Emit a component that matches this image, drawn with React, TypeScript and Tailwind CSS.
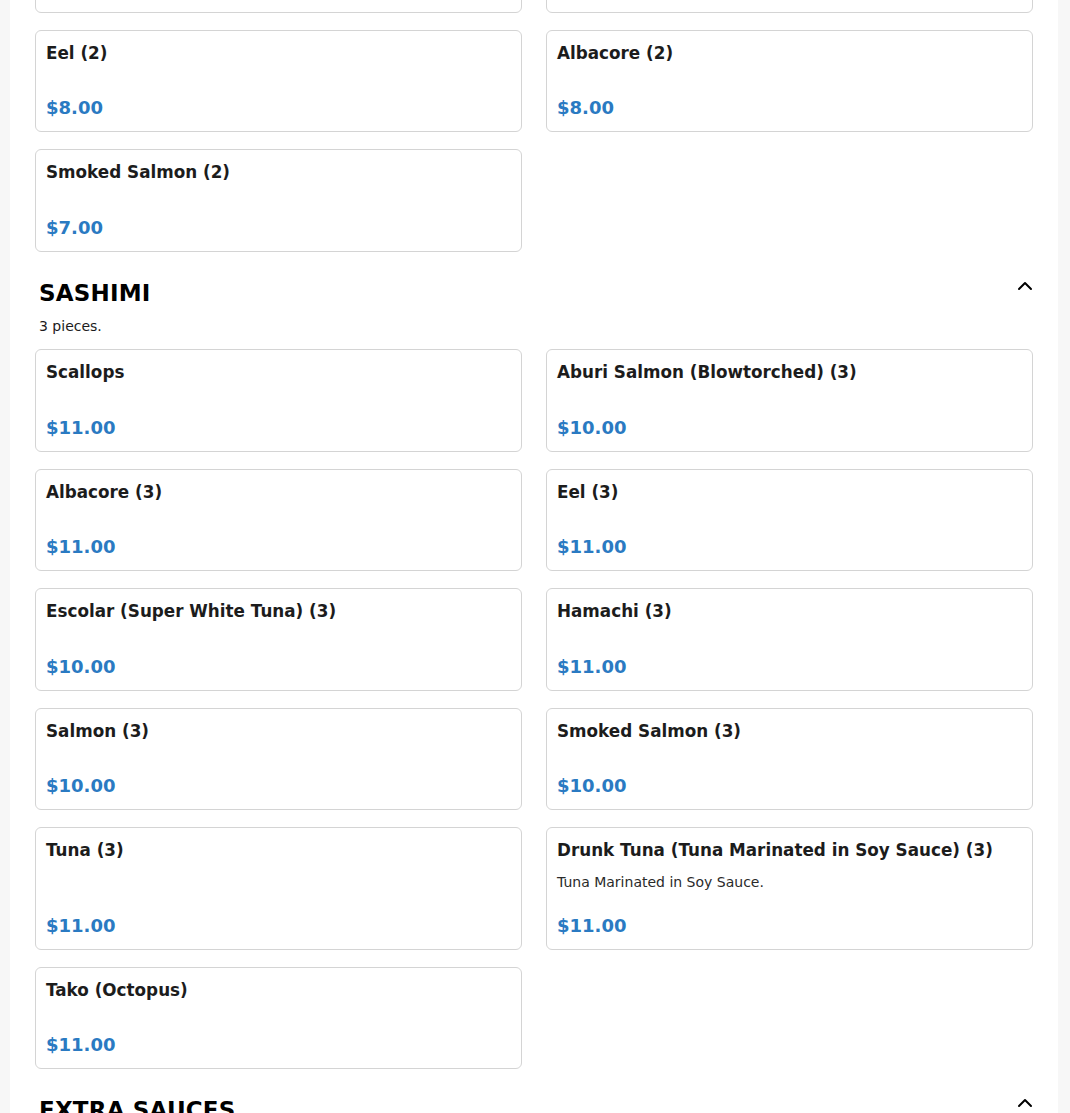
import React from 'react';
import { ChevronUp } from 'lucide-react';

type Item = { name: string; price: string; description?: string };

const nigiriTail: Item[] = [
  { name: 'Salmon (2)', price: '$8.00' },
  { name: 'Tuna (2)', price: '$8.00' },
  { name: 'Eel (2)', price: '$8.00' },
  { name: 'Albacore (2)', price: '$8.00' },
  { name: 'Smoked Salmon (2)', price: '$7.00' },
];

const sashimi: Item[] = [
  { name: 'Scallops', price: '$11.00' },
  { name: 'Aburi Salmon (Blowtorched) (3)', price: '$10.00' },
  { name: 'Albacore (3)', price: '$11.00' },
  { name: 'Eel (3)', price: '$11.00' },
  { name: 'Escolar (Super White Tuna) (3)', price: '$10.00' },
  { name: 'Hamachi (3)', price: '$11.00' },
  { name: 'Salmon (3)', price: '$10.00' },
  { name: 'Smoked Salmon (3)', price: '$10.00' },
  { name: 'Tuna (3)', price: '$11.00' },
  {
    name: 'Drunk Tuna (Tuna Marinated in Soy Sauce) (3)',
    price: '$11.00',
    description: 'Tuna Marinated in Soy Sauce.',
  },
  { name: 'Tako (Octopus)', price: '$11.00' },
];

function MenuCard({ item }: { item: Item }) {
  return (
    <div className="flex flex-col rounded-md border border-[#d4d4d4] bg-white p-[10px]">
      <h3 className="mb-[9.5px] text-[16.8px] font-bold leading-[24px] text-[#1c1c1c]">{item.name}</h3>
      {item.description && (
        <p className="text-sm leading-5 text-[#2a2a2a]">{item.description}</p>
      )}
      <div className="mt-auto pt-[20px] text-[18px] font-bold leading-[27px] text-[#2a7ac2]">
        {item.price}
      </div>
    </div>
  );
}

function SectionHeader({ title, note }: { title: string; note?: string }) {
  return (
    <div className="mt-6 mb-[13px] px-1">
      <div className="flex items-start justify-between">
        <h2 className="text-[23px] font-bold leading-[34.5px] tracking-[0.2px] text-black">{title}</h2>
        <ChevronUp className="-mr-2 -mt-0.5 h-6 w-6 text-black" strokeWidth={2} />
      </div>
      {note && <p className="mt-[6px] text-sm leading-5 text-[#1c1c1c]">{note}</p>}
    </div>
  );
}

export default function App() {
  return (
    <div
      className="h-[1113px] overflow-hidden bg-[#f7f7f7]"
      style={{ fontFamily: '"DejaVu Sans", "Liberation Sans", sans-serif' }}
    >
      <div className="mx-[10px] w-[1048px] bg-white px-[25px]">
        <div className="-mt-[90px] grid grid-cols-2 gap-x-6 gap-y-[17px]">
          {nigiriTail.map((item, i) => (
            <MenuCard key={i} item={item} />
          ))}
        </div>

        <SectionHeader title="SASHIMI" note="3 pieces." />
        <div className="grid grid-cols-2 gap-x-6 gap-y-[17px]">
          {sashimi.map((item, i) => (
            <MenuCard key={i} item={item} />
          ))}
        </div>

        <SectionHeader title="EXTRA SAUCES" />
        <div className="h-40" />
      </div>
    </div>
  );
}
